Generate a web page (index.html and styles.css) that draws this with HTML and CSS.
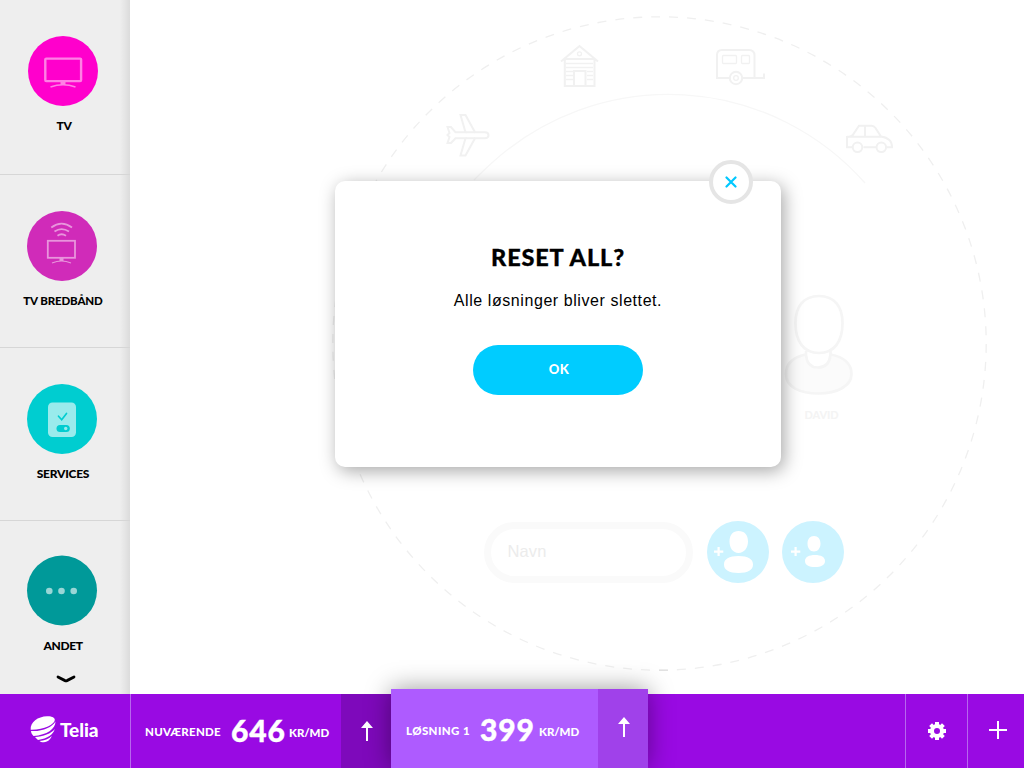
FILE: index.html
```html
<!DOCTYPE html>
<html lang="da">
<head>
<meta charset="utf-8">
<title>Telia</title>
<link rel="stylesheet" href="styles.css">
</head>
<body>
<div class="app">
  <nav class="sidebar">
    <a class="product product-tv">
      <svg class="disc" viewBox="0 0 70 70"><circle cx="35" cy="35" r="35" fill="#ff00cc"/><g fill="none" stroke="#ff80e5" stroke-width="2.400"><rect x="17.300" y="22.600" width="35.800" height="22.500" rx="1"/><path d="M22.500 51Q35 46.500 47.500 51" stroke-width="1.500"/></g><path fill="#ff80e5" d="M32.500 45h5v4h-5z"/></svg>
      <span class="label">TV</span>
    </a>
    <a class="product product-broadband">
      <svg class="disc" viewBox="0 0 70 70"><circle cx="35" cy="35" r="35" fill="#d02bb9"/><g fill="none" stroke="#e895dc" stroke-width="1.800"><rect x="20.800" y="29.800" width="27.200" height="17"/><path d="M25 52Q34.500 48 44 52" stroke-width="1.200"/><path d="M24.300 16.500Q34.500 8.800 45 16.500M27.500 20.600Q34.500 15.600 42 20.600M30.500 24.700Q34.500 21.800 39 24.700"/></g><path fill="#e895dc" d="M32.500 47h4v3h-4z"/></svg>
      <span class="label">TV BREDBÅND</span>
    </a>
    <a class="product product-services">
      <svg class="disc" viewBox="0 0 70 70"><circle cx="35" cy="35" r="35" fill="#00cdd0"/><rect x="21" y="18.500" width="28" height="34.500" rx="4.500" fill="#99ebec"/><path d="M31.500 32.200l3.200 3.500 4.800-6.200" fill="none" stroke="#00cdd0" stroke-width="1.700" stroke-linecap="round"/><rect x="29.500" y="41" width="13.300" height="7" rx="3.500" fill="#00cdd0"/><circle cx="38.700" cy="44.500" r="1.700" fill="#99ebec"/></svg>
      <span class="label">SERVICES</span>
    </a>
    <a class="product product-other">
      <svg class="disc" viewBox="0 0 70 70"><circle cx="35" cy="34.500" r="35" fill="#009999"/><g fill="#99d6d6"><circle cx="22.300" cy="35" r="3.300"/><circle cx="34.500" cy="35" r="3.300"/><circle cx="46.700" cy="35" r="3.300"/></g></svg>
      <span class="label">ANDET</span>
      <svg class="more" viewBox="0 0 20 8"><path d="M2 2L9 5.600Q10 6 11 5.600L18 2" fill="none" stroke="#000" stroke-width="2.800" stroke-linecap="round"/></svg>
    </a>
  </nav>

  <main class="stage">
    <svg class="scene" viewBox="130 0 894 694">
      <circle cx="659.500" cy="343.500" r="326.700" fill="none" stroke="#efefef" stroke-width="1.300" stroke-dasharray="9 9" stroke-dashoffset="-.5"/>
      <path d="M659 670.200h9" stroke="#dedede" stroke-width="1.200"/>
      <path d="M474 180Q485 169 494 161A262 262 0 0 1 865 183" fill="none" stroke="#f7f7f7" stroke-width="1.300"/>
      <g class="outline">
        <path d="M561 61.500L579.500 46 598 61.500M564.800 59V86H594.500V59M564.800 59H594.500M574 86V71H585.500V86"/>
        <path class="thin" d="M566 63.500H593M566 67.500H593M566 71.500H573M587 71.500H593M566 75.500H573M587 75.500H593M566 79.500H573M587 79.500H593"/>
        <circle class="thin" cx="579.500" cy="53.800" r="2"/>
        <path d="M729 78H717V55Q717 50 722 50H749Q754.500 50 754.500 55.500V77.500M743 78H764V73.500"/>
        <rect x="722.500" y="55.500" width="14" height="8" rx="1" class="thin"/><rect x="741.500" y="55.500" width="8" height="8" rx="1" class="thin"/>
        <circle cx="736" cy="78" r="6.200"/><circle class="thin" cx="736" cy="78" r="2.300"/>
        <path d="M852 147.300H847V137Q852 137 853.500 134L859 125.800H871.500Q874 125.800 875.500 128L881 136.500Q892 138 892 147.300H887M863.500 147.300H876M847 136.800H882M865 126V136.500"/>
        <circle cx="857.500" cy="147.300" r="4.800"/><circle cx="881.300" cy="147.300" r="4.800"/>
        <path d="M455.500 132.300H465.500L460.500 115H465.500L475 132.300H485Q488.500 132.500 488.500 135.200 488.500 138 485 138.200H475L465.500 155.500H460.500L465.500 138.200H455.500L451 143H447.500L449.500 137 447.500 135 449.500 133 447.500 127H451Z"/>
        <path d="M465.500 132.300H475M465.500 138.200H475"/>
      </g>
      <g fill="none" stroke="#f5f5f5" stroke-width="2.700">
        <path d="M805.500 354.500C792 357.500 786 364 786 374 786 387 800 393.500 818.500 393.500S851.500 386 851.500 374C851.500 364 844 357 830.500 354.500" fill="#fbfbfb"/>
        <path d="M806 351V355Q807 367.500 818 367.500T830.500 355V351" fill="#fff"/>
        <path d="M819 296C804 296 795.500 306 795.500 323 795.500 342 804 353 819 353S842.500 342 842.500 323C842.500 306 834 296 819 296Z" fill="#fff"/>
      </g>
      <text class="person" x="804.500" y="419">DAVID</text>
    </svg>
    <form class="add-person">
      <span class="name-field">Navn</span>
      <svg class="add" viewBox="0 0 62 62"><circle cx="31" cy="31" r="31" fill="#ccf3ff"/><g fill="#fff"><path d="M31.500 10C37.500 10 41 14 41 20.500S37 32 31.500 32 22.500 27 22.500 20.500 26 10 31.500 10ZM31.500 35C41 35 46 38 46 43.500S41 52 31.500 52 17 49 17 43.500 22 35 31.500 35Z"/><path d="M10.500 26h2.200v3.600H16.300v2.200h-3.600V35h-2.200v-3.200H7v-2.200h3.500z"/></g></svg>
      <svg class="add add-child" viewBox="0 0 62 62"><circle cx="31" cy="31" r="31" fill="#ccf3ff"/><g fill="#fff"><path d="M32 15C36 15 38.500 18 38.500 22.500S36 30.500 32 30.500 25.500 27 25.500 22.500 28 15 32 15ZM33 34C39 34 43 36 43 40S39 46 33 46 23 44 23 40 27 34 33 34Z"/><path d="M12.500 26h2.200v3.600H18.300v2.200h-3.600V35h-2.200v-3.200H9v-2.200h3.500z"/></g></svg>
    </form>
  </main>

  <footer class="bar">
    <div class="brand">
      <svg class="mark" viewBox="0 0 27 28"><g fill="#fff"><path d="M.7 14.700C0 7 8 1.500 17 1.200 22 1 25 2.700 24.800 5 24.500 9.500 14 15 .7 14.700Z"/><path d="M1 16C12 16.800 22 12.500 25.500 6.500 25.500 14 17 20 3.500 21 2 19.500 1.200 18 1 16Z"/><path d="M5 22C13 21.800 21.500 18.500 24.700 14 23.500 19.500 17.500 23.500 8 25 7 24 5.800 23 5 22Z"/><path d="M9.500 26C14 25.700 19 24 21.800 21 20 25.300 17 27 14 27.200 12 27.300 10.500 27 9.500 26Z"/></g></svg>
      <span class="wordmark">Telia</span>
    </div>
    <section class="plan plan-current">
      <span class="plan-name">NUVÆRENDE</span><span class="price">646</span><span class="unit">KR/MD</span>
    </section>
    <button class="raise raise-current"><svg class="arrow" viewBox="0 0 12 21"><path fill="#fff" d="M6 0l6 7H7v13H5V7H0z"/></svg></button>
    <section class="plan plan-active">
      <div class="plan-body"><span class="plan-name">LØSNING 1</span><span class="price">399</span><span class="unit">KR/MD</span></div>
      <button class="raise raise-active"><svg class="arrow" viewBox="0 0 12 21"><path fill="#fff" d="M6 0l6 7H7v13H5V7H0z"/></svg></button>
    </section>
    <div class="tools">
      <button class="tool tool-settings"><svg class="gear" viewBox="0 0 18 18"><path fill="none" stroke="#fff" stroke-width="4" d="M9 0v3M9 15v3M0 9h3M15 9h3M2.600 2.600l2.200 2.200M13.200 13.200l2.200 2.200M15.400 2.600l-2.200 2.200M4.800 13.200l-2.200 2.200"/><circle cx="9" cy="9" r="5" fill="none" stroke="#fff" stroke-width="4"/></svg></button>
      <button class="tool tool-new"><svg class="plus" viewBox="0 0 18 18"><path d="M9 0v18M0 9h18" stroke="#fff" stroke-width="2"/></svg></button>
    </div>
  </footer>

  <div class="dialog" role="dialog">
    <button class="close"><svg class="cross" viewBox="0 0 12 12"><path d="M1.500 1.500l9 9M10.500 1.500l-9 9" stroke="#00c8ff" stroke-width="2.200" stroke-linecap="round"/></svg></button>
    <h1 class="title">RESET ALL?</h1>
    <p class="message">Alle løsninger bliver slettet.</p>
    <button class="ok">OK</button>
  </div>
</div>
</body>
</html>
```
FILE: styles.css
```css
* { box-sizing: border-box; }
body { margin: 0; font-family: Lato, "Liberation Sans", sans-serif; }
button { margin: 0; padding: 0; border: 0; font-family: inherit; }
svg { display: block; flex: none; }
.app {
  position: relative;
  width: 1024px; height: 768px;
  display: grid;
  grid-template-columns: 130px 894px;
  grid-template-rows: 694px 74px;
  overflow: hidden;
  background: #fff;
}
.sidebar {
  display: flex; flex-direction: column;
  background: linear-gradient(90deg, rgba(0,0,0,0) 120px, rgba(0,0,0,.08) 130px) #eee;
}
.product {
  display: flex; flex-direction: column; align-items: center;
  height: 173px; padding: 36px 6px 0 0;
  border-bottom: 1px solid #d6d6d6;
}
.product-tv { height: 175px; padding-right: 4px; }
.product-other { padding-top: 35px; border: 0; }
.disc { width: 70px; height: 70px; overflow: visible; }
.label { margin-top: 13px; font-weight: 900; font-size: 12px; line-height: 14px; letter-spacing: -.25px; white-space: nowrap; margin-right: -2px; }
.product-broadband .label { font-size: 11.500px; letter-spacing: -.15px; }
.product-other .label { letter-spacing: -.4px; }
.more { width: 20px; height: 8px; margin: 22px -8px 0 0; }

.stage { position: relative; display: flex; flex-direction: column; }
.scene { position: absolute; inset: 0; width: 894px; height: 694px; }
.outline { fill: none; stroke: #f1f1f1; stroke-width: 2; }
.outline .thin { stroke-width: 1.300; }
.person { font-size: 11px; font-weight: 900; letter-spacing: -.1px; fill: #f4f4f4; }
.add-person {
  position: relative;
  display: flex; align-items: center;
  margin: 521px 0 0 354px;
}
.name-field {
  width: 209px; height: 61px; padding-left: 16.500px; margin-right: 14px;
  border: 7px solid #fafafa; border-radius: 31px;
  font: 16.500px/45px "Liberation Sans", sans-serif; letter-spacing: .1px; color: #ececec;
}
.add { width: 62px; height: 62px; }
.add-child { margin-left: 13px; }

.bar {
  grid-column: 1 / 3;
  position: relative;
  display: flex;
  background: #990ae3;
  color: #fff;
}
.brand {
  width: 131px; padding-left: 30px;
  display: flex; align-items: center;
  border-right: 1px solid #b766ee;
}
.mark { width: 27px; height: 28px; margin-top: -5px; }
.wordmark { margin: -3px 0 0 3px; font-size: 19px; font-weight: 900; letter-spacing: -.1px; }
.plan { display: flex; white-space: nowrap; }
.plan-current { width: 210px; padding-left: 14px; align-items: baseline; line-height: 72px; }
.plan-name { position: relative; top: -6px; width: 86px; font-size: 11.500px; font-weight: 900; letter-spacing: .25px; }
.price {
  width: 58px; font-size: 30px; font-weight: 900; letter-spacing: .8px;
  -webkit-text-stroke: .4px #fff; stroke-linejoin: round;
}
.unit { position: relative; top: -5px; font-size: 11.500px; font-weight: 900; letter-spacing: -.1px; }
.raise { width: 50px; display: flex; justify-content: center; align-items: center; }
.raise-current { background: #7e09bb; padding-left: 2px; }
.arrow { width: 12px; height: 21px; }
.plan-active {
  height: 79px; margin-top: -5px;
  box-shadow: 0 0 24px rgba(0,0,0,.4);
}
.plan-body { width: 207px; padding-left: 15px; display: flex; align-items: baseline; line-height: 81px; background: #ae5bff; }
.plan-body .plan-name { width: 74px; letter-spacing: .4px; }
.plan-body .unit { letter-spacing: -.1px; }
.plan-body .price { width: 59px; }
.raise-active { background: #a041ea; padding: 0 0 2px 2px; }
.tools { display: flex; margin-left: auto; }
.tool { display: flex; align-items: center; justify-content: center; border-left: 1px solid #b766ee; background: none; }
.tool-settings { width: 62px; }
.tool-new { width: 57px; padding-left: 4px; }
.gear, .plus { width: 18px; height: 18px; }
.plus { margin-top: -2px; }

.dialog {
  position: absolute; left: 335px; top: 181px;
  width: 446px; height: 286px;
  display: flex; flex-direction: column; align-items: center;
  padding-top: 61px;
  border-radius: 10px;
  background: #fff;
  box-shadow: 3px 4px 18px rgba(0,0,0,.35);
}
.close {
  position: absolute; right: 28px; top: -21px;
  width: 44px; height: 44px;
  display: flex; align-items: center; justify-content: center;
  border: 4px solid #e5e5e5; border-radius: 50%;
  background: #fff;
}
.cross { width: 12px; height: 12px; }
.title { margin: 0; font-size: 23.500px; line-height: 30px; font-weight: 900; letter-spacing: .85px; -webkit-text-stroke: .3px #000; }
.message { margin: 19px 0 0; font: 16px/20px "Liberation Sans", sans-serif; letter-spacing: .57px; }
.ok {
  width: 170px; height: 50px; margin-top: 34px; padding: 0 0 2px 2px;
  border-radius: 25px;
  background: #00ccff; color: #fff;
  font-size: 13px; font-weight: 900; letter-spacing: .4px;
}
```
